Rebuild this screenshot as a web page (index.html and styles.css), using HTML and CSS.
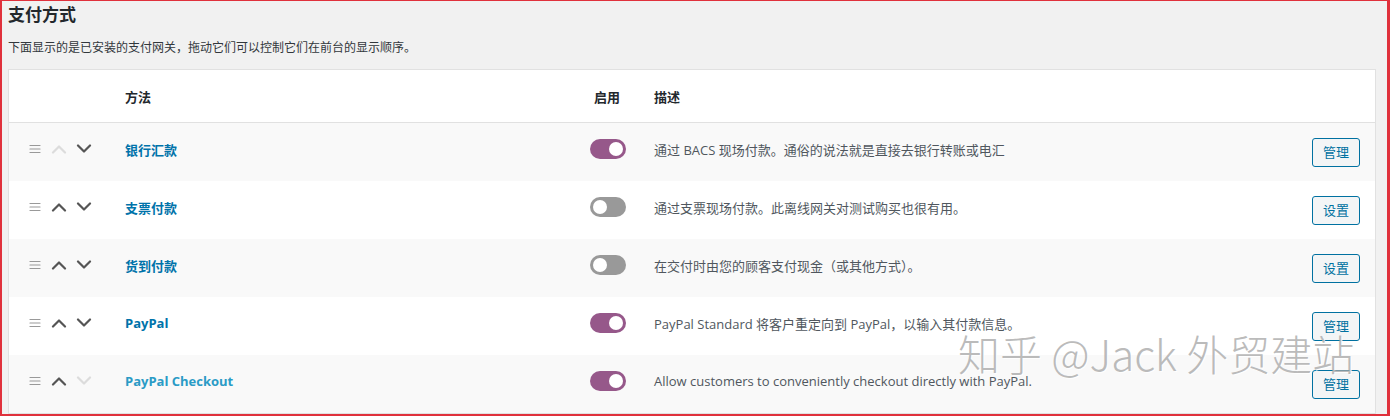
FILE: index.html
```html
<!DOCTYPE html>
<html lang="zh-CN">

<head>
  <meta charset="UTF-8">
  <title>支付方式</title>
  <link rel="stylesheet" href="styles.css">
</head>

<body>
  <div class="frame">
    <h2 class="title">支付方式</h2>
    <p class="intro">下面显示的是已安装的支付网关，拖动它们可以控制它们在前台的显示顺序。</p>

    <table class="gateways">
      <thead>
        <tr>
          <th class="col-sort"></th>
          <th class="col-name">方法</th>
          <th class="col-status">启用</th>
          <th class="col-desc">描述</th>
          <th class="col-action"></th>
        </tr>
      </thead>
      <tbody>
        <tr>
          <td class="col-sort">
            <span class="sort">
              <svg class="drag" viewBox="0 0 12 10"><path d="M1 1.5h10M1 5h10M1 8.5h10" /></svg>
              <svg class="move off" viewBox="0 0 16 10"><path d="M2 8.5l6-6 6 6" /></svg>
              <svg class="move" viewBox="0 0 16 10"><path d="M2 1.5l6 6 6-6" /></svg>
            </span>
          </td>
          <td class="col-name"><a href="#">银行汇款</a></td>
          <td class="col-status"><span class="toggle on"></span></td>
          <td class="col-desc">通过 BACS 现场付款。通俗的说法就是直接去银行转账或电汇</td>
          <td class="col-action"><a class="button" href="#">管理</a></td>
        </tr>
        <tr>
          <td class="col-sort">
            <span class="sort">
              <svg class="drag" viewBox="0 0 12 10"><path d="M1 1.5h10M1 5h10M1 8.5h10" /></svg>
              <svg class="move" viewBox="0 0 16 10"><path d="M2 8.5l6-6 6 6" /></svg>
              <svg class="move" viewBox="0 0 16 10"><path d="M2 1.5l6 6 6-6" /></svg>
            </span>
          </td>
          <td class="col-name"><a href="#">支票付款</a></td>
          <td class="col-status"><span class="toggle"></span></td>
          <td class="col-desc">通过支票现场付款。此离线网关对测试购买也很有用。</td>
          <td class="col-action"><a class="button" href="#">设置</a></td>
        </tr>
        <tr>
          <td class="col-sort">
            <span class="sort">
              <svg class="drag" viewBox="0 0 12 10"><path d="M1 1.5h10M1 5h10M1 8.5h10" /></svg>
              <svg class="move" viewBox="0 0 16 10"><path d="M2 8.5l6-6 6 6" /></svg>
              <svg class="move" viewBox="0 0 16 10"><path d="M2 1.5l6 6 6-6" /></svg>
            </span>
          </td>
          <td class="col-name"><a href="#">货到付款</a></td>
          <td class="col-status"><span class="toggle"></span></td>
          <td class="col-desc">在交付时由您的顾客支付现金（或其他方式）。</td>
          <td class="col-action"><a class="button" href="#">设置</a></td>
        </tr>
        <tr>
          <td class="col-sort">
            <span class="sort">
              <svg class="drag" viewBox="0 0 12 10"><path d="M1 1.5h10M1 5h10M1 8.5h10" /></svg>
              <svg class="move" viewBox="0 0 16 10"><path d="M2 8.5l6-6 6 6" /></svg>
              <svg class="move" viewBox="0 0 16 10"><path d="M2 1.5l6 6 6-6" /></svg>
            </span>
          </td>
          <td class="col-name"><a href="#">PayPal</a></td>
          <td class="col-status"><span class="toggle on"></span></td>
          <td class="col-desc">PayPal Standard 将客户重定向到 PayPal，以输入其付款信息。</td>
          <td class="col-action"><a class="button" href="#">管理</a></td>
        </tr>
        <tr>
          <td class="col-sort">
            <span class="sort">
              <svg class="drag" viewBox="0 0 12 10"><path d="M1 1.5h10M1 5h10M1 8.5h10" /></svg>
              <svg class="move" viewBox="0 0 16 10"><path d="M2 8.5l6-6 6 6" /></svg>
              <svg class="move off" viewBox="0 0 16 10"><path d="M2 1.5l6 6 6-6" /></svg>
            </span>
          </td>
          <td class="col-name"><a class="hover" href="#">PayPal Checkout</a></td>
          <td class="col-status"><span class="toggle on"></span></td>
          <td class="col-desc">Allow customers to conveniently checkout directly with PayPal.</td>
          <td class="col-action"><a class="button" href="#">管理</a></td>
        </tr>
      </tbody>
    </table>

    <div class="watermark">知乎 @Jack 外贸建站</div>
  </div>
</body>

</html>
```

FILE: styles.css
```css
/* 支付网关列表 */
html,
body {
  margin: 0;
  padding: 0;
}

body {
  font-family: "Open Sans", "Noto Sans CJK SC", sans-serif;
  font-size: 13px;
  color: #23282d;
  background: #fff;
}

.frame {
  position: relative;
  box-sizing: border-box;
  height: 416px;
  overflow: hidden;
  padding: 0 11px 0 6px;
  background: #f1f1f1;
  border: 2px solid #e0313c;
  border-width: 1px 3px 2px 2px;
}

.title {
  margin: 0;
  padding-top: 3px;
  font-size: 17px;
  font-weight: 700;
  line-height: 22px;
  color: #23282d;
}

.intro {
  margin: 14px 0 0;
  font-size: 12px;
  line-height: 16px;
  color: #32373c;
}

.gateways {
  width: 100%;
  margin-top: 13px;
  border-collapse: collapse;
  table-layout: fixed;
  background: #fff;
  border: 1px solid #e1e1e1;
}

.gateways th {
  height: 52px;
  padding: 0 8px;
  text-align: left;
  font-weight: 700;
  font-size: 13px;
  color: #23282d;
  border-bottom: 1px solid #e1e1e1;
}

.gateways td {
  height: 52px;
  padding: 0 8px 6px;
  vertical-align: middle;
  color: #50575e;
}

.gateways tbody tr:nth-child(odd) {
  background: #f9f9f9;
}

.col-sort {
  width: 92px;
}

.col-name {
  width: 449px;
}

.col-status {
  width: 48px;
}

.col-action {
  width: 60px;
  text-align: right;
}

.gateways td.col-sort {
  padding-left: 20px;
}

.gateways td.col-action {
  padding-right: 15px;
}

.gateways th.col-status {
  padding-left: 12px;
  padding-right: 4px;
}

.sort {
  display: flex;
  align-items: center;
}

.sort svg {
  fill: none;
  stroke-linecap: round;
  stroke-linejoin: round;
}

.drag {
  width: 12px;
  height: 10px;
  margin-right: 10px;
  stroke: #999;
  stroke-width: 1.2;
}

.move {
  width: 16px;
  height: 10px;
  margin-right: 9px;
  stroke: #555;
  stroke-width: 2.2;
}

.move.off {
  stroke: #dcdcdc;
}

.col-name a {
  font-weight: 700;
  color: #0073aa;
  text-decoration: none;
}

.col-name a.hover {
  color: #2a9bc6;
}

.toggle {
  display: block;
  position: relative;
  width: 36px;
  height: 20px;
  border-radius: 10px;
  background: #999;
}

.toggle::after {
  content: "";
  position: absolute;
  top: 3px;
  left: 3px;
  width: 14px;
  height: 14px;
  border-radius: 50%;
  background: #fff;
}

.toggle.on {
  background: #96588a;
}

.toggle.on::after {
  left: 19px;
}

.button {
  display: inline-block;
  box-sizing: border-box;
  width: 48px;
  height: 29px;
  margin-top: 6px;
  line-height: 27px;
  text-align: center;
  font-size: 13px;
  color: #0071a1;
  background: #f3f5f6;
  border: 1px solid #0071a1;
  border-radius: 3px;
  text-decoration: none;
}

.watermark {
  position: absolute;
  left: 956px;
  top: 328px;
  font-family: "Noto Sans CJK SC", sans-serif;
  font-size: 42px;
  font-weight: 300;
  line-height: 48px;
  color: rgba(165, 165, 165, 0.75);
  text-shadow: 1px 1px 0 rgba(255, 255, 255, 0.9);
  pointer-events: none;
}
```
